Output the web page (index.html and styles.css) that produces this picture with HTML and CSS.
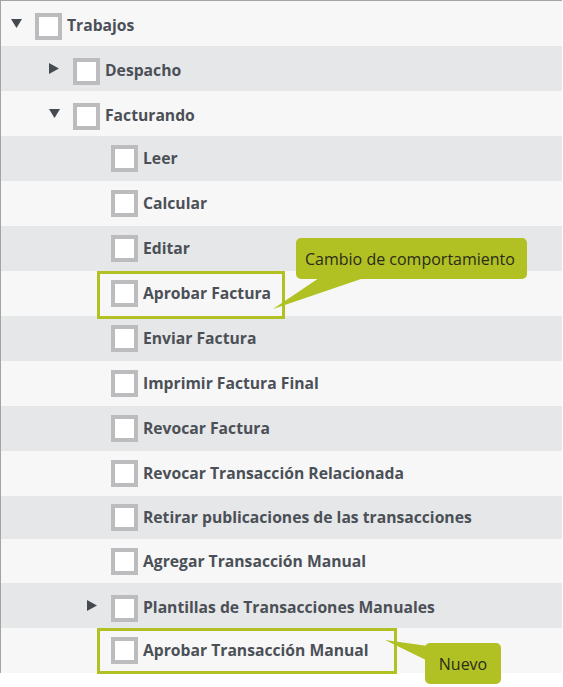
FILE: index.html
```html
<!DOCTYPE html>
<html lang="es">
<head>
    <meta charset="UTF-8">
    <meta name="viewport" content="width=device-width, initial-scale=1.0">
    <title>Permisos - Trabajos</title>
    <link rel="stylesheet" href="styles.css">
</head>
<body>
    <div class="tree">
        <div class="rows">
            <div class="row parent level-0">
                <span class="caret"><svg width="11" height="9" viewBox="0 0 11 9"><path d="M0 0H11L5.5 9Z"/></svg></span>
                <span class="check"></span>
                <span class="label">Trabajos</span>
            </div>
            <div class="row parent level-1">
                <span class="caret"><svg width="10" height="11" viewBox="0 0 10 11"><path d="M0 0L10 5.5L0 11Z"/></svg></span>
                <span class="check"></span>
                <span class="label">Despacho</span>
            </div>
            <div class="row parent level-1">
                <span class="caret"><svg width="11" height="9" viewBox="0 0 11 9"><path d="M0 0H11L5.5 9Z"/></svg></span>
                <span class="check"></span>
                <span class="label">Facturando</span>
            </div>
            <div class="row level-2">
                <span class="caret"></span>
                <span class="check"></span>
                <span class="label">Leer</span>
            </div>
            <div class="row level-2">
                <span class="caret"></span>
                <span class="check"></span>
                <span class="label">Calcular</span>
            </div>
            <div class="row level-2">
                <span class="caret"></span>
                <span class="check"></span>
                <span class="label">Editar</span>
            </div>
            <div class="row level-2">
                <span class="caret"></span>
                <span class="check"></span>
                <span class="label">Aprobar Factura</span>
            </div>
            <div class="row level-2">
                <span class="caret"></span>
                <span class="check"></span>
                <span class="label">Enviar Factura</span>
            </div>
            <div class="row level-2">
                <span class="caret"></span>
                <span class="check"></span>
                <span class="label">Imprimir Factura Final</span>
            </div>
            <div class="row level-2">
                <span class="caret"></span>
                <span class="check"></span>
                <span class="label">Revocar Factura</span>
            </div>
            <div class="row level-2">
                <span class="caret"></span>
                <span class="check"></span>
                <span class="label">Revocar Transacción Relacionada</span>
            </div>
            <div class="row level-2 row-43">
                <span class="caret"></span>
                <span class="check"></span>
                <span class="label">Retirar publicaciones de las transacciones</span>
            </div>
            <div class="row level-2 row-44">
                <span class="caret"></span>
                <span class="check"></span>
                <span class="label">Agregar Transacción Manual</span>
            </div>
            <div class="row parent level-2">
                <span class="caret"><svg width="10" height="11" viewBox="0 0 10 11"><path d="M0 0L10 5.5L0 11Z"/></svg></span>
                <span class="check"></span>
                <span class="label">Plantillas de Transacciones Manuales</span>
            </div>
            <div class="row level-2">
                <span class="caret"></span>
                <span class="check"></span>
                <span class="label">Aprobar Transacción Manual</span>
            </div>
        </div>

        <!-- anotaciones -->
        <div class="mark mark-cambio"></div>
        <div class="mark mark-nuevo"></div>
        <svg class="tails" width="563" height="687" viewBox="0 0 563 687">
            <polygon points="319,278 364,278 273,309"/>
            <polygon points="385,640 428,646 428,661"/>
        </svg>
        <div class="callout callout-cambio">Cambio de comportamiento</div>
        <div class="callout callout-nuevo">Nuevo</div>
    </div>
</body>
</html>
```

FILE: styles.css
```css
body {
    margin: 0;
    min-height: 100vh;
    background-color: #ffffff;
    font-family: 'Open Sans', 'Noto Sans', sans-serif;
}

.tree {
    position: relative;
    width: 561px;
    border-top: 1px solid #a4a4a4;
    border-left: 1px solid #a4a4a4;
}

.row {
    display: flex;
    align-items: center;
    height: 45px;
    box-sizing: border-box;
    color: #4b5057;
    font-size: 15.7px;
    font-weight: 700;
}

.rows .row:nth-child(odd) {
    background-color: #f7f7f7;
}

.rows .row:nth-child(even) {
    background-color: #e6e7e8;
}

.row-43 { height: 43px; }
.row-44 { height: 44px; }

.level-0 { padding-left: 10px; }
.level-1 { padding-left: 48px; }
.level-2 { padding-left: 86px; }

/* le righe con freccia hanno il contenuto un po' più in basso */
.parent .check {
    margin-top: 6px;
}

.parent .label {
    margin-top: 3px;
}

.caret {
    display: flex;
    align-items: center;
    width: 24px;
    flex-shrink: 0;
}

.caret svg {
    display: block;
    fill: #454a50;
}

.check {
    width: 27px;
    height: 27px;
    box-sizing: border-box;
    border: 4px solid #bcbcbe;
    background-color: #ffffff;
    margin-right: 5px;
    flex-shrink: 0;
}

.label {
    white-space: nowrap;
    margin-bottom: 1px;
}

.mark {
    position: absolute;
    box-sizing: border-box;
    border: 3px solid #b1c022;
}

.mark-cambio {
    left: 96px;
    top: 270px;
    width: 188px;
    height: 48px;
}

.mark-nuevo {
    left: 96px;
    top: 627px;
    width: 300px;
    height: 46px;
}

.tails {
    position: absolute;
    left: -1px;
    top: -1px;
    fill: #b1c022;
}

.callout {
    position: absolute;
    display: flex;
    align-items: center;
    height: 41px;
    box-sizing: border-box;
    background-color: #b1c022;
    border-radius: 5px;
    color: #2a2c1b;
    font-size: 16px;
    white-space: nowrap;
}

.callout-cambio {
    left: 295px;
    top: 237px;
    width: 231px;
    padding-left: 9px;
}

.callout-nuevo {
    left: 424px;
    top: 642px;
    width: 76px;
    justify-content: center;
}
```
